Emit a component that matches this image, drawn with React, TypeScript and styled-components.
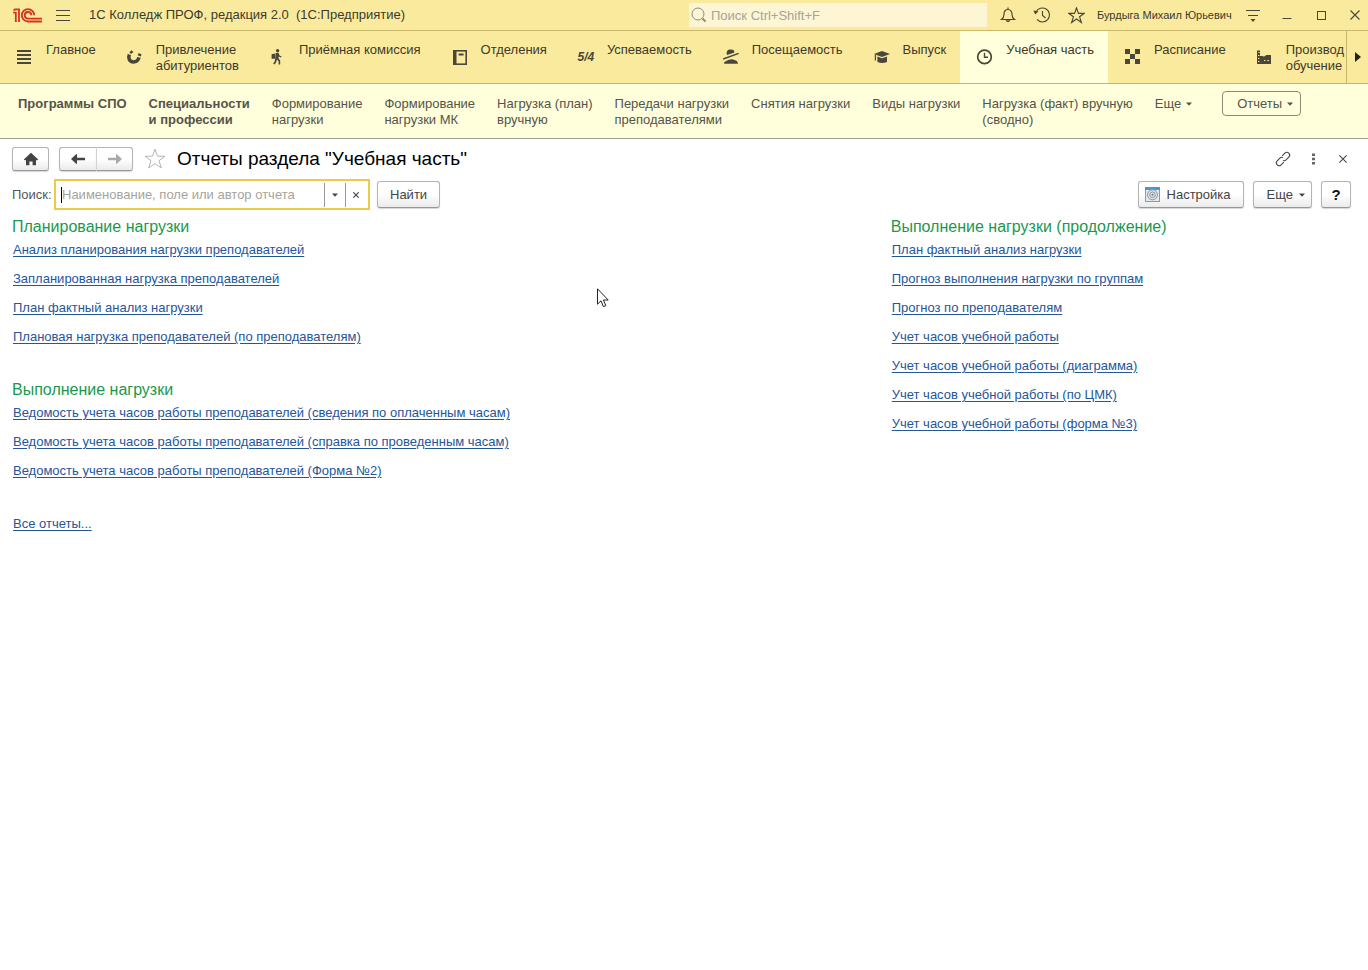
import React from 'react';
import styled, { createGlobalStyle } from 'styled-components';

const INK = '#4a473a';

const GlobalStyle = createGlobalStyle`
  * { box-sizing: border-box; }
  body {
    margin: 0;
    background: #fff;
    color: #444;
    font-family: 'Liberation Sans', Arial, sans-serif;
    font-size: 13px;
    line-height: 16px;
  }
  button, input { font: inherit; color: inherit; }
`;

const Page = styled.div`
  position: relative;
`;

/* ---- Title bar ---- */

const TitleBar = styled.header`
  display: flex;
  align-items: center;
  gap: 8px;
  height: 31px;
  padding-left: 13px;
  background: #faea9e;
  border-bottom: 1px solid #c9b96a;
  white-space: nowrap;
`;

const IconButton = styled.button`
  display: flex;
  align-items: center;
  justify-content: center;
  flex: none;
  width: 26px;
  height: 26px;
  padding: 0;
  border: 0;
  background: none;
  color: ${INK};
`;

const AppTitle = styled.div`
  padding-left: 5px;
  color: #3d3a2c;
`;

const GlobalSearch = styled.label`
  display: flex;
  align-items: center;
  gap: 4px;
  width: 298px;
  height: 24px;
  margin-left: auto;
  padding-left: 2px;
  background: #fdf5d3;
  color: #8f8c80;
`;

const PlainInput = styled.input`
  flex: 1;
  min-width: 0;
  height: 100%;
  padding: 0;
  border: 0;
  outline: 0;
  background: none;
  &::placeholder { color: #a6a49b; opacity: 1; }
`;

const UserName = styled.div`
  width: 135px;
  font-size: 11px;
  color: #3d3a2c;
`;

/* ---- Sections ---- */

const Sections = styled.nav`
  display: flex;
  height: 53px;
  background: #faea9e;
  border-bottom: 1px solid #c2b56c;
`;

const SectionList = styled.div`
  display: flex;
  flex: 1;
  min-width: 0;
  overflow: hidden;
`;

const Section = styled.button<{ $active?: boolean }>`
  display: flex;
  align-items: flex-start;
  flex: none;
  gap: 12px;
  padding: 11px 14px 0 16px;
  border: 0;
  background: ${p => (p.$active ? '#ffffdb' : 'none')};
  color: #3d3a2c;
  text-align: left;
  white-space: pre;
  &:last-child { padding-right: 0; }
`;

const SectionIcon = styled.span`
  display: flex;
  justify-content: center;
  flex: none;
  width: 18px;
  padding-top: 6px;
  color: ${INK};
`;

const ScrollRight = styled.button`
  display: flex;
  align-items: center;
  justify-content: center;
  width: 22px;
  padding: 0;
  border: 0;
  border-left: 1px solid #c2b56c;
  background: none;
  color: #222;
`;

/* ---- Commands of the section ---- */

const Commands = styled.nav`
  display: flex;
  align-items: flex-start;
  gap: 22px;
  height: 55px;
  padding: 12px 18px 0;
  background: #ffffdb;
  border-bottom: 1px solid #a09c8c;
`;

const Command = styled.a<{ $strong?: boolean }>`
  color: #55534a;
  font-weight: ${p => (p.$strong ? 700 : 400)};
  text-decoration: none;
  white-space: pre;
`;

const DropButton = styled.button`
  display: flex;
  align-items: center;
  gap: 5px;
  padding: 0;
  border: 0;
  background: none;
  color: #55534a;
`;

const ReportsButton = styled(DropButton)`
  height: 25px;
  margin: -5px 0 0 8px;
  padding: 0 7px 0 14px;
  border: 1px solid #8d8a76;
  border-radius: 4px;
`;

/* ---- Form ---- */

const Form = styled.main`
  padding: 8px 17px 0 12px;
`;

const FormHeader = styled.div`
  display: flex;
  align-items: center;
  height: 24px;
`;

const Raised = styled.button`
  display: flex;
  align-items: center;
  justify-content: center;
  height: 27px;
  padding: 0 12px;
  border: 1px solid #b3b3b3;
  border-bottom-color: #979797;
  border-radius: 3px;
  background: linear-gradient(#fff 50%, #ebebeb);
  box-shadow: 0 1px 1px #d6d6d6;
  color: #444;
`;

const HomeButton = styled(Raised)`
  width: 37px;
  height: 24px;
  padding: 0;
`;

const History = styled.div`
  display: flex;
  margin: 0 11px 0 10px;
`;

const HistoryButton = styled(HomeButton)<{ $side: 'left' | 'right' }>`
  border-radius: ${p => (p.$side === 'left' ? '3px 0 0 3px' : '0 3px 3px 0')};
  border-right-width: ${p => (p.$side === 'left' ? 0 : 1)}px;
  border-left-color: ${p => (p.$side === 'left' ? '#b3b3b3' : '#d2d2d2')};
`;

const StarButton = styled(IconButton)`
  width: 22px;
`;

const FormTitle = styled.h1`
  flex: 1;
  margin: 0;
  padding-left: 11px;
  font-size: 19px;
  line-height: 24px;
  font-weight: 400;
  color: #000;
`;

const HeaderActions = styled.div`
  display: flex;
  gap: 4px;
  margin-right: -5px;
`;

const Toolbar = styled.div`
  display: flex;
  align-items: center;
  height: 31px;
  margin-top: 8px;
`;

const SearchLabel = styled.label`
  width: 42px;
  color: #555;
`;

const SearchField = styled.div`
  display: flex;
  align-items: center;
  width: 316px;
  height: 31px;
  margin-right: 7px;
  padding: 0 2px 0 5px;
  border: 2px solid #ecca45;
`;

const Caret = styled.span`
  width: 1px;
  height: 16px;
  background: #000;
`;

const FieldButton = styled.button`
  display: flex;
  align-items: center;
  justify-content: center;
  width: 21px;
  height: 24px;
  padding: 0;
  border: 0;
  border-left: 1px solid #999;
  background: none;
  color: #444;
`;

const ToolbarRight = styled.div`
  display: flex;
  gap: 9px;
  margin-left: auto;
`;

const SettingsButton = styled(Raised)`
  gap: 7px;
  padding: 0 12px 0 6px;
`;

const MoreButton = styled(Raised)`
  gap: 6px;
  padding: 0 6px 0 13px;
`;

const HelpButton = styled(Raised)`
  width: 30px;
  padding: 0;
  font-size: 15px;
  font-weight: 700;
  color: #111;
`;

/* ---- Report lists ---- */

const Columns = styled.div`
  display: grid;
  grid-template-columns: 21fr 11fr;
  padding-top: 7px;
`;

const Group = styled.section`
  margin-bottom: 35px;
`;

const GroupTitle = styled.h2`
  margin: 0;
  font-size: 16px;
  line-height: 20px;
  font-weight: 400;
  color: #1a9850;
`;

const Links = styled.ul`
  display: flex;
  flex-direction: column;
  gap: 13px;
  margin: 0;
  padding: 5px 0 0 1px;
  list-style: none;
`;

const ReportLink = styled.a`
  color: #24569a;
  text-decoration: underline;
  text-underline-offset: 2px;
`;

const AllReports = styled.div`
  padding: 2px 0 0 1px;
`;

const Pointer = styled.svg`
  position: absolute;
  left: 597px;
  top: 288px;
`;

/* ---- Icons ---- */

const Svg = ({ w, h, children }: { w: number; h: number; children: React.ReactNode }) => (
  <svg width={w} height={h} viewBox={`0 0 ${w} ${h}`} fill="none" aria-hidden="true">{children}</svg>
);

const Logo = () => (
  <Svg w={29} h={15}>
    <g stroke="#d3331f" strokeWidth="1.8">
      <path d="M0.2 4.6H2.8V14" />
      <path d="M0.6 2.6L2 1.3H6V14" />
      <path d="M21.2 7.2A6.2 6.2 0 1 0 15 13.5H29" />
      <path d="M18.3 7.2A3.3 3.3 0 1 0 15 10.6H29" />
    </g>
  </Svg>
);

const DownMark = () => (
  <Svg w={6} h={4}><path d="M0 0.5H6L3 3.8Z" fill="currentColor" /></Svg>
);

const MenuIcon = () => (
  <Svg w={14} h={12}><path d="M0 1.5H14M0 6.5H14M0 11.5H14" stroke="currentColor" /></Svg>
);

const SearchIcon = () => (
  <Svg w={16} h={16}>
    <circle cx="7" cy="7" r="6" stroke="currentColor" />
    <path d="M11.5 11.5L14.6 14.6" stroke="currentColor" strokeWidth="2" />
  </Svg>
);

const BellIcon = () => (
  <Svg w={16} h={16}>
    <path d="M8 0.6V2.5M1.5 12.5H14.5C12.4 11 12 9.3 12 7.3C12 4.4 10.6 2.5 8 2.5S4 4.4 4 7.3C4 9.3 3.6 11 1.5 12.5Z" stroke="currentColor" strokeWidth="1.2" />
    <path d="M5.5 13.2H10.5Q8 17 5.5 13.2Z" fill="currentColor" />
  </Svg>
);

const HistoryIcon = () => (
  <Svg w={18} h={16}>
    <path d="M3 5.2A7 7 0 1 1 4 12.4" stroke="currentColor" strokeWidth="1.1" />
    <path d="M0.4 3.4L5.4 4.2L2.2 7.6Z" fill="currentColor" />
    <path d="M9.5 4V8.4L12.6 11" stroke="currentColor" strokeWidth="1.1" />
  </Svg>
);

const StarIcon = ({ size, color = 'currentColor' }: { size: number; color?: string }) => (
  <svg width={size} height={size} viewBox="0 0 22 22" fill="none" aria-hidden="true">
    <path d="M11 1.2L13.5 8.2H21L15 12.7L17.3 20L11 15.6L4.7 20L7 12.7L1 8.2H8.5Z" stroke={color} strokeWidth={size > 18 ? 1 : 1.5} />
  </svg>
);

const FunnelIcon = () => (
  <Svg w={14} h={13}>
    <path d="M0 1.5H14M2 6.5H12" stroke="currentColor" />
    <path d="M4.5 10H9.5L7 13Z" fill="currentColor" />
  </Svg>
);

const MinimizeIcon = () => (
  <Svg w={10} h={10}><path d="M0.5 8.5H9.5" stroke="currentColor" /></Svg>
);

const MaximizeIcon = () => (
  <Svg w={9} h={9}><rect x="0.5" y="0.5" width="8" height="8" stroke="currentColor" /></Svg>
);

const CrossIcon = ({ size }: { size: number }) => (
  <svg width={size} height={size} viewBox="0 0 10 10" fill="none" aria-hidden="true">
    <path d="M0.5 0.5L9.5 9.5M9.5 0.5L0.5 9.5" stroke="currentColor" strokeWidth={11 / size} />
  </svg>
);

const ListIcon = () => (
  <Svg w={18} h={17}><path d="M1 3H15M1 7H15M1 11H15M1 15H15" stroke="currentColor" strokeWidth="2" /></Svg>
);

const MagnetIcon = () => (
  <Svg w={18} h={18}>
    <path d="M3.4 6.4C1.8 10 3.4 14 7.4 14C10.4 14 12.2 12.4 13 9.4" stroke="currentColor" strokeWidth="3.6" />
    <path d="M3.4 4.2L5.6 2.2L7.4 4L5 6ZM11.6 7.2L12.8 5L15.6 6.4L14.8 8.6Z" fill="currentColor" />
  </Svg>
);

const HikerIcon = () => (
  <Svg w={14} h={17}>
    <circle cx="6.6" cy="2.7" r="1.7" fill="currentColor" />
    <path d="M0.6 6.2L4 5.4V10.8H0.6Z" fill="currentColor" />
    <path d="M4.6 5H7.6L8.6 7.4L10.6 8.4L10 9.4L7.6 8.6V10.4L9.2 12.6V16.6H7.6V13.2L6 11.6L5.2 14.2L3.6 16.6L2.2 15.8L3.8 13L4.2 10.6Z" fill="currentColor" />
  </Svg>
);

const BookIcon = () => (
  <Svg w={16} h={18}>
    <rect x="1.8" y="2.8" width="12.4" height="13.4" stroke="currentColor" strokeWidth="1.6" />
    <path d="M3 2V17" stroke="currentColor" strokeWidth="3" />
    <path d="M6.6 6.5H11.6" stroke="currentColor" strokeWidth="2" />
  </Svg>
);

const GradeMark = styled.span`
  font-size: 12px;
  font-weight: 700;
  font-style: italic;
  line-height: 18px;
`;

const AbsentIcon = () => (
  <Svg w={18} h={17}>
    <path d="M5 7C3.8 3.4 5.6 1.4 8.6 1.4S13 3 12 4.8L5 7Z" fill="currentColor" />
    <path d="M1.2 11L16.6 5.4" stroke="currentColor" strokeWidth="1.5" />
    <path d="M2 15.8C2 13.4 5 12.8 7 11.8C9 10.8 11 11 12.4 12C14.6 12.8 16 13.6 16 15.8Z" fill="currentColor" />
  </Svg>
);

const CapIcon = () => (
  <Svg w={18} h={17}>
    <path d="M1 6L9 3L17 6L9 9Z" fill="currentColor" />
    <path d="M4.4 8.4L9 10.2L14 8.4V14Q9 15.8 4.4 14Z" fill="currentColor" />
    <path d="M2.4 6.5V12.4" stroke="currentColor" strokeWidth="1.2" />
  </Svg>
);

const ClockIcon = () => (
  <Svg w={18} h={18}>
    <circle cx="8.5" cy="8.9" r="6.8" stroke="currentColor" strokeWidth="1.7" />
    <path d="M8.5 4.8V9.2H12" stroke="currentColor" strokeWidth="1.4" />
  </Svg>
);

const CheckerIcon = () => (
  <Svg w={18} h={17}>
    <path d="M1 1H6V6H1ZM11 1H16V6H11ZM6 6H11V11H6ZM1 11H6V16H1ZM11 11H16V16H11Z" fill="currentColor" />
  </Svg>
);

const FactoryIcon = () => (
  <Svg w={18} h={18}>
    <path d="M1 2.4H4V8H7.4V9L10.4 7H15V16H1Z" fill="currentColor" />
    <path d="M2.4 4.5H3.6M2 7.5H3.4M2 10.5H3.4M2 13.5H3.4M8 12.5H9.4M11.4 12.5H13" stroke="#faea9e" />
  </Svg>
);

const HomeIcon = () => (
  <Svg w={16} h={14}>
    <path d="M8 0.8L15.2 7.5L14 8.6L13 7.7V13.2H9.6V9.4H6.4V13.2H3V7.7L2 8.6L0.8 7.5Z" fill="#444" />
  </Svg>
);

const ArrowIcon = ({ back }: { back?: boolean }) => (
  <Svg w={14} h={12}>
    {back
      ? <path d="M0 6L5.4 1L6 1.6V4.8H14V7.2H6V10.4L5.4 11Z" fill="#444" />
      : <path d="M14 6L8.6 1L8 1.6V4.8H0V7.2H8V10.4L8.6 11Z" fill="#aaa" />}
  </Svg>
);

const LinkIcon = () => (
  <Svg w={18} h={18}>
    <g transform="rotate(-45 9 9)" stroke="currentColor" strokeWidth="1.1">
      <path d="M7.4 11.8H3.6A2.8 2.8 0 0 1 3.6 6.2H7.4A2.8 2.8 0 0 1 10 8" />
      <path d="M10.6 6.2H14.4A2.8 2.8 0 0 1 14.4 11.8H10.6A2.8 2.8 0 0 1 8 10" />
    </g>
  </Svg>
);

const DotsIcon = () => (
  <Svg w={3} h={12}><path d="M0 0.5H3V3H0ZM0 4.8H3V7.3H0ZM0 9H3V11.5H0Z" fill="#666" /></Svg>
);

const GearIcon = () => (
  <Svg w={15} h={15}>
    <rect x="0.5" y="0.5" width="14" height="14" fill="#e4e9ed" stroke="#8b9aa6" />
    <path d="M0 0H15V3H0Z" fill="#4a97cf" />
    <circle cx="7.5" cy="7.8" r="5" fill="#dfe3e6" stroke="#8d98a0" />
    <circle cx="7.5" cy="7.8" r="2.8" stroke="#8d98a0" />
    <circle cx="7.5" cy="7.8" r="1" fill="#6f7b84" />
  </Svg>
);

/* ---- Data ---- */

const sections: { label: string; icon: React.ReactNode; active?: boolean }[] = [
  { label: 'Главное', icon: <ListIcon /> },
  { label: 'Привлечение\nабитуриентов', icon: <MagnetIcon /> },
  { label: 'Приёмная комиссия', icon: <HikerIcon /> },
  { label: 'Отделения', icon: <BookIcon /> },
  { label: 'Успеваемость', icon: <GradeMark>5/4</GradeMark> },
  { label: 'Посещаемость', icon: <AbsentIcon /> },
  { label: 'Выпуск', icon: <CapIcon /> },
  { label: 'Учебная часть', icon: <ClockIcon />, active: true },
  { label: 'Расписание', icon: <CheckerIcon /> },
  { label: 'Производ\nобучение', icon: <FactoryIcon /> },
];

const commands: { label: string; strong?: boolean }[] = [
  { label: 'Программы СПО', strong: true },
  { label: 'Специальности\nи профессии', strong: true },
  { label: 'Формирование\nнагрузки' },
  { label: 'Формирование\nнагрузки МК' },
  { label: 'Нагрузка (план)\nвручную' },
  { label: 'Передачи нагрузки\nпреподавателями' },
  { label: 'Снятия нагрузки' },
  { label: 'Виды нагрузки' },
  { label: 'Нагрузка (факт) вручную\n(сводно)' },
];

const planning = [
  'Анализ планирования нагрузки преподавателей',
  'Запланированная нагрузка преподавателей',
  'План фактный анализ нагрузки',
  'Плановая нагрузка преподавателей (по преподавателям)',
];

const fulfilment = [
  'Ведомость учета часов работы преподавателей (сведения по оплаченным часам)',
  'Ведомость учета часов работы преподавателей (справка по проведенным часам)',
  'Ведомость учета часов работы преподавателей (Форма №2)',
];

const fulfilmentMore = [
  'План фактный анализ нагрузки',
  'Прогноз выполнения нагрузки по группам',
  'Прогноз по преподавателям',
  'Учет часов учебной работы',
  'Учет часов учебной работы (диаграмма)',
  'Учет часов учебной работы (по ЦМК)',
  'Учет часов учебной работы (форма №3)',
];

const ReportGroup = ({ title, items }: { title: string; items: string[] }) => (
  <Group>
    <GroupTitle>{title}</GroupTitle>
    <Links>
      {items.map(item => (
        <li key={item}><ReportLink href="#">{item}</ReportLink></li>
      ))}
    </Links>
  </Group>
);

export default function App() {
  return (
    <Page>
      <GlobalStyle />
      <TitleBar>
        <Logo />
        <IconButton aria-label="Меню"><MenuIcon /></IconButton>
        <AppTitle>1С Колледж ПРОФ, редакция 2.0&nbsp; (1С:Предприятие)</AppTitle>
        <GlobalSearch>
          <SearchIcon />
          <PlainInput type="text" placeholder="Поиск Ctrl+Shift+F" aria-label="Поиск" />
        </GlobalSearch>
        <IconButton aria-label="Уведомления"><BellIcon /></IconButton>
        <IconButton aria-label="История"><HistoryIcon /></IconButton>
        <IconButton aria-label="Избранное"><StarIcon size={17} /></IconButton>
        <UserName>Бурдыга Михаил Юрьевич</UserName>
        <IconButton aria-label="Настройки окна"><FunnelIcon /></IconButton>
        <IconButton aria-label="Свернуть"><MinimizeIcon /></IconButton>
        <IconButton aria-label="Развернуть"><MaximizeIcon /></IconButton>
        <IconButton aria-label="Закрыть"><CrossIcon size={10} /></IconButton>
      </TitleBar>

      <Sections>
        <SectionList>
          {sections.map(s => (
            <Section key={s.label} $active={s.active}>
              <SectionIcon>{s.icon}</SectionIcon>
              {s.label}
            </Section>
          ))}
        </SectionList>
        <ScrollRight aria-label="Вперёд">
          <Svg w={6} h={10}><path d="M0 0L6 5L0 10Z" fill="currentColor" /></Svg>
        </ScrollRight>
      </Sections>

      <Commands>
        {commands.map(c => (
          <Command key={c.label} href="#" $strong={c.strong}>{c.label}</Command>
        ))}
        <DropButton>Еще <DownMark /></DropButton>
        <ReportsButton>Отчеты <DownMark /></ReportsButton>
      </Commands>

      <Form>
        <FormHeader>
          <HomeButton aria-label="Начальная страница"><HomeIcon /></HomeButton>
          <History>
            <HistoryButton $side="left" aria-label="Назад"><ArrowIcon back /></HistoryButton>
            <HistoryButton $side="right" aria-label="Вперед"><ArrowIcon /></HistoryButton>
          </History>
          <StarButton aria-label="В избранное"><StarIcon size={24} color="#b5b5b5" /></StarButton>
          <FormTitle>Отчеты раздела "Учебная часть"</FormTitle>
          <HeaderActions>
            <IconButton aria-label="Ссылка"><LinkIcon /></IconButton>
            <IconButton aria-label="Еще действия"><DotsIcon /></IconButton>
            <IconButton aria-label="Закрыть форму"><CrossIcon size={8} /></IconButton>
          </HeaderActions>
        </FormHeader>

        <Toolbar>
          <SearchLabel htmlFor="report-search">Поиск:</SearchLabel>
          <SearchField>
            <Caret />
            <PlainInput id="report-search" type="text" placeholder="Наименование, поле или автор отчета" />
            <FieldButton aria-label="Выбрать из списка"><DownMark /></FieldButton>
            <FieldButton aria-label="Очистить"><CrossIcon size={6} /></FieldButton>
          </SearchField>
          <Raised>Найти</Raised>
          <ToolbarRight>
            <SettingsButton><GearIcon />Настройка</SettingsButton>
            <MoreButton>Еще <DownMark /></MoreButton>
            <HelpButton>?</HelpButton>
          </ToolbarRight>
        </Toolbar>

        <Columns>
          <div>
            <ReportGroup title="Планирование нагрузки" items={planning} />
            <ReportGroup title="Выполнение нагрузки" items={fulfilment} />
            <AllReports><ReportLink href="#">Все отчеты...</ReportLink></AllReports>
          </div>
          <ReportGroup title="Выполнение нагрузки (продолжение)" items={fulfilmentMore} />
        </Columns>
      </Form>

      <Pointer width="12" height="20" viewBox="0 0 12 20" aria-hidden="true">
        <path d="M0.5 0.8V16.2L4 12.8L6.4 18.6L8.8 17.6L6.4 12H11.2Z" fill="#fff" stroke="#222" />
      </Pointer>
    </Page>
  );
}
